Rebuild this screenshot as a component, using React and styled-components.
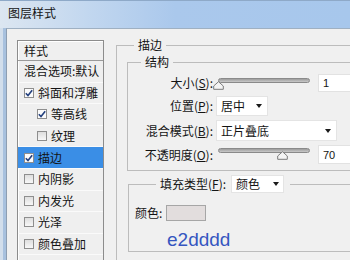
import React from "react";
import styled, { createGlobalStyle } from "styled-components";

const GlobalStyle = createGlobalStyle`
  * { box-sizing: border-box; }
  html, body { margin: 0; padding: 0; background: #f0f0f0; }
  body {
    font-family: "Noto Sans CJK SC", "Noto Sans", sans-serif;
    font-size: 12px;
    color: #141414;
  }
`;

const Window = styled.div`
  width: 350px;
  height: 260px;
  overflow: hidden;
  display: flex;
  flex-direction: column;
  background: #f0f0f0;
`;

const TitleBar = styled.div`
  flex: none;
  height: 28px;
  display: flex;
  align-items: center;
  padding: 0 0 3px 8px;
  border-top: 1px solid #8ea9c8;
  background: linear-gradient(to right, #dce6f1 0%, #c2d7ef 25%, #aac8ec 50%, #a7c7ec 100%);
  line-height: 16px;
`;

const Frame = styled.div`
  flex: 1;
  display: flex;
  min-height: 0;
`;

const FrameEdge = styled.div`
  flex: none;
  width: 6px;
  background: linear-gradient(to right, #d2deeb 0 3px, #a8c1de 3px 6px);
`;

const Client = styled.div`
  flex: 1;
  display: flex;
  align-items: flex-start;
  padding: 8px 0 0 10px;
  border-left: 1px solid #8d9eb1;
  border-top: 1px solid #9fb0c2;
  background: #f0f0f0;
`;

const StyleList = styled.div`
  flex: none;
  width: 87px;
  margin-top: 3px;
  border: 1px solid #8c8c8c;
  background: #efefef;
  box-shadow: inset 1px 1px 0 #fff;
`;

const ListHeader = styled.div`
  height: 20px;
  line-height: 19px;
  padding-left: 6px;
  border-bottom: 1px solid #9a9a9a;
`;

const ListRow = styled.div`
  height: 21.6px;
  display: flex;
  align-items: center;
  gap: 4px;
  padding-left: ${(p) => (p.$indent ? 19 : 6)}px;
  border-bottom: 1px solid #fafafa;
  background: ${(p) => (p.$selected ? "#3a8ee6" : "transparent")};
  white-space: nowrap;
  overflow: hidden;
  line-height: 16px;
`;

const CheckBox = styled.span`
  flex: none;
  width: 10px;
  height: 10px;
  border: 1px solid #8e8e8e;
  background: ${(p) =>
    p.$checked ? "#fbfbfb" : "linear-gradient(#dedede, #f7f7f7)"};
  display: flex;
  align-items: center;
  justify-content: center;
`;

const Panel = styled.div`
  flex: none;
  width: 260px;
  margin-left: 12px;
`;

const GroupBox = styled.fieldset`
  margin: ${(p) => p.$margin || "0"};
  padding: ${(p) => p.$pad || "0"};
  border: 1px solid #bcbcbc;
  min-width: 0;
  width: ${(p) => p.$w}px;
`;

const Legend = styled.legend`
  margin-left: ${(p) => p.$offset}px;
  padding: 0 4px;
  line-height: ${(p) => p.$lh}px;
  font-size: 12px;
`;

const LegendInner = styled.span`
  display: inline-flex;
  align-items: center;
  gap: 5px;
  height: 18px;
  padding-right: 2px;
`;

const Rows = styled.div`
  display: flex;
  flex-direction: column;
  gap: 4px;
  padding: 3px 0 6px;
`;

const Row = styled.div`
  height: ${(p) => p.$h}px;
  display: flex;
  align-items: center;
`;

const Label = styled.div`
  flex: none;
  width: 85px;
  margin-right: 3px;
  text-align: right;
  white-space: nowrap;
  line-height: 16px;
`;

const SliderBox = styled.div`
  position: relative;
  flex: none;
  width: 96px;
  height: 100%;
  margin-right: 6px;
`;

const Track = styled.div`
  width: 92px;
  height: 5px;
  margin: ${(p) => p.$top}px 0 0 2px;
  border: 1px solid #8a8a8a;
  border-radius: 3px;
  background: linear-gradient(#9c9c9c, #c9c9c9);
`;

const Handle = styled.div`
  position: absolute;
  top: ${(p) => p.$top}px;
  width: 11px;
  height: 9px;
  display: flex;
`;

const NumberBox = styled.div`
  flex: none;
  width: 40px;
  height: 100%;
  display: flex;
  align-items: center;
  padding-left: 4px;
  background: #fff;
  border: 1px solid #e2e2e2;
  font-family: "Liberation Sans", Arial, sans-serif;
  font-size: 11px;
`;

const Select = styled.div`
  flex: none;
  width: ${(p) => p.$w}px;
  height: ${(p) => (p.$h ? `${p.$h}px` : "100%")};
  display: flex;
  align-items: center;
  justify-content: space-between;
  padding: 0 ${(p) => p.$pr || 5}px 0 4px;
  background: #fff;
  border: 1px solid #e4e4e4;
  line-height: 16px;
`;

const Caret = styled.span`
  width: 0;
  height: 0;
  border-left: 3.5px solid transparent;
  border-right: 3.5px solid transparent;
  border-top: 4px solid #1a1a1a;
`;

const FillBody = styled.div`
  padding: 12px 0 0 6px;
`;

const ColorRow = styled.div`
  height: 16px;
  display: flex;
  align-items: center;
  gap: 4px;
  line-height: 16px;
`;

const Swatch = styled.div`
  width: 40px;
  height: 16px;
  background: #e2dddd;
  border: 1px solid #a6a6a6;
`;

const HexText = styled.div`
  margin: 8px 0 0 32px;
  font-family: "Liberation Sans", Arial, sans-serif;
  font-size: 19px;
  line-height: 22px;
  color: #3556c0;
`;

const Tick = () => (
  <svg width="8" height="8" viewBox="0 0 8 8">
    <path
      d="M0.8 4.2 L3 6.6 L7.2 1.2"
      fill="none"
      stroke="#23407e"
      strokeWidth="1.6"
    />
  </svg>
);

const Slider = ({ value, trackTop }) => (
  <SliderBox>
    <Track $top={trackTop} />
    <Handle $top={trackTop + 3} style={{ left: `${2 + value * 0.92 - 5.5}px` }}>
      <svg width="11" height="9" viewBox="0 0 11 9">
        <path
          d="M5.5 0.7 L10.3 5 L10.3 8.3 L0.7 8.3 L0.7 5 Z"
          fill="#f4f4f4"
          stroke="#7c7c7c"
          strokeWidth="1"
          strokeLinejoin="round"
        />
      </svg>
    </Handle>
  </SliderBox>
);

const effects = [
  { name: "混合选项:默认", plain: true },
  { name: "斜面和浮雕", checked: true },
  { name: "等高线", checked: true, indent: true },
  { name: "纹理", indent: true },
  { name: "描边", checked: true, selected: true },
  { name: "内阴影" },
  { name: "内发光" },
  { name: "光泽" },
  { name: "颜色叠加" },
  { name: "渐变叠加", checked: true },
];

const App = () => (
  <Window>
    <GlobalStyle />
    <TitleBar>图层样式</TitleBar>
    <Frame>
      <FrameEdge />
      <Client>
        <StyleList>
          <ListHeader>样式</ListHeader>
          {effects.map((e) => (
            <ListRow key={e.name} $indent={e.indent} $selected={e.selected}>
              {!e.plain && (
                <CheckBox $checked={e.checked}>{e.checked && <Tick />}</CheckBox>
              )}
              {e.name}
            </ListRow>
          ))}
        </StyleList>

        <Panel>
          <GroupBox $w={260} $pad="0 0 10px 10px">
            <Legend $offset={7} $lh={16}>描边</Legend>
            <GroupBox $w={240}>
              <Legend $offset={13} $lh={18}>结构</Legend>
              <Rows>
                <Row $h={18}>
                  <Label>
                    大小(<u>S</u>):
                  </Label>
                  <Slider value={1} trackTop={4} />
                  <NumberBox>1</NumberBox>
                </Row>
                <Row $h={20}>
                  <Label>
                    位置(<u>P</u>):
                  </Label>
                  <Select $w={52}>
                    居中
                    <Caret />
                  </Select>
                </Row>
                <Row $h={21}>
                  <Label>
                    混合模式(<u>B</u>):
                  </Label>
                  <Select $w={121}>
                    正片叠底
                    <Caret />
                  </Select>
                </Row>
                <Row $h={19}>
                  <Label>
                    不透明度(<u>O</u>):
                  </Label>
                  <Slider value={70} trackTop={3} />
                  <NumberBox>70</NumberBox>
                </Row>
              </Rows>
            </GroupBox>

            <GroupBox $w={240} $margin="4px 0 0 1px">
              <Legend $offset={27} $lh={18}>
                <LegendInner>
                  <span>
                    填充类型(<u>F</u>):
                  </span>
                  <Select $w={53} $h={18} $pr={4}>
                    颜色
                    <Caret />
                  </Select>
                </LegendInner>
              </Legend>
              <FillBody>
                <ColorRow>
                  颜色:
                  <Swatch />
                </ColorRow>
                <HexText>e2dddd</HexText>
              </FillBody>
            </GroupBox>
          </GroupBox>
        </Panel>
      </Client>
    </Frame>
  </Window>
);

export default App;
